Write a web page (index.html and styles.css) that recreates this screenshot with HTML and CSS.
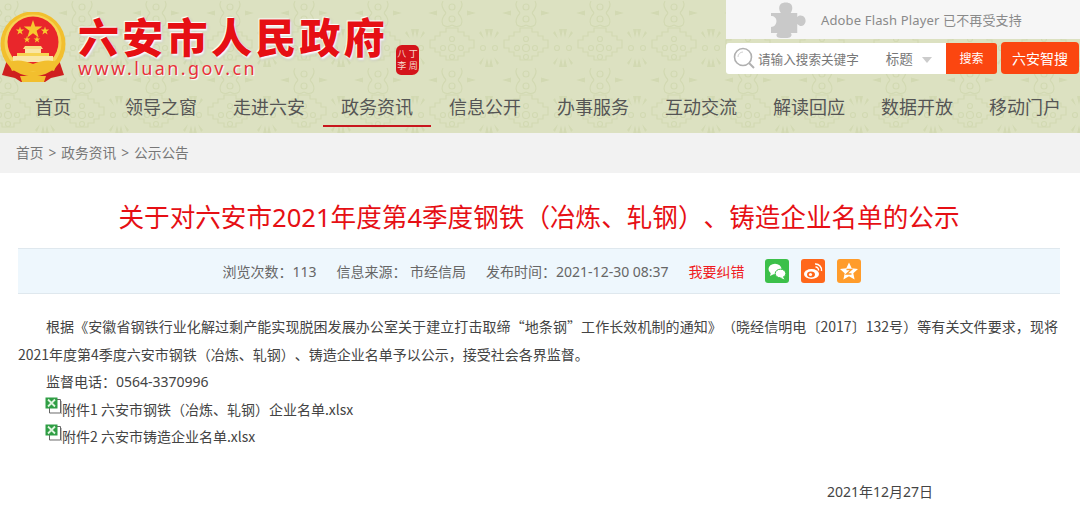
FILE: index.html
```html
<!DOCTYPE html>
<html>
<head>
    <meta charset="utf-8">
    <title>关于对六安市2021年度第4季度钢铁（冶炼、轧钢）、铸造企业名单的公示</title>
    <link rel="stylesheet" href="styles.css">
</head>
<body>
    <header class="site-head">
        <div class="head-top">
            <div class="logo">
                <svg class="emblem" viewBox="0 0 66 70" width="66" height="70">
                    <path d="M7 48 L2 63 L15 66 L21 70 L45 70 L51 66 L64 63 L59 48 Z" fill="#cf1f1f"/>
                    <circle cx="33" cy="32" r="32.5" fill="#f2bf2e"/>
                    <circle cx="33" cy="31" r="28.5" fill="#f7d353"/>
                    <circle cx="33" cy="30" r="25.5" fill="#e9262b"/>
                    <polygon points="33,8 35.2,14.6 42.2,14.6 36.6,18.8 38.7,25.4 33,21.3 27.3,25.4 29.4,18.8 23.8,14.6 30.8,14.6" fill="#f7c92f"/>
                    <polygon points="20,14.5 21,17.6 24.2,17.6 21.6,19.5 22.6,22.6 20,20.7 17.4,22.6 18.4,19.5 15.8,17.6 19,17.6" fill="#f7c92f"/>
                    <polygon points="45,14.5 46,17.6 49.2,17.6 46.6,19.5 47.6,22.6 45,20.7 42.4,22.6 43.4,19.5 40.8,17.6 44,17.6" fill="#f7c92f"/>
                    <polygon points="27,24 27.8,26.5 30.4,26.5 28.3,28 29.1,30.5 27,29 24.9,30.5 25.7,28 23.6,26.5 26.2,26.5" fill="#f7c92f"/>
                    <polygon points="37,24 37.8,26.5 40.4,26.5 38.3,28 39.1,30.5 37,29 34.9,30.5 35.7,28 33.6,26.5 36.2,26.5" fill="#f7c92f"/>
                    <path d="M23 37 H43 L41 34 H25 Z" fill="#f8dc84"/>
                    <rect x="25" y="37" width="16" height="4" fill="#f9e6a6"/>
                    <rect x="17" y="41" width="32" height="3" fill="#f7d353"/>
                    <rect x="13" y="44" width="40" height="6" fill="#f9e6a6"/>
                    <path d="M8 50 Q20 46 33 52 Q46 46 58 50 L54 59 Q44 55 38 61 Q33 57 28 61 Q22 55 12 59 Z" fill="#f2bf2e"/>
                    <path d="M20 64 H46 L44 70 H22 Z" fill="#f2bf2e"/>
                </svg>
                <div class="logo-text">
                    <div class="logo-name">六安市人民政府</div>
                    <div class="logo-url">www.luan.gov.cn</div>
                </div>
                <div class="seal"><span>八</span><span>丁</span><span>李</span><span>周</span></div>
            </div>
            <div class="head-right">
                <div class="flash-box">
                    <svg class="puzzle" viewBox="4 0 32 36" width="35" height="36" preserveAspectRatio="none">
                        <path d="M4 11 H13 C11 8 11 4 13 2 C15 0 20 0 22 2 C24 4 24 8 22 11 H28 V15 C30 13 33 13 35 16 C36 18 36 21 34 23 C32 25 30 24 28 22 V31 H22 C24 33 22 36 19 36 H13 C9 36 8 33 10 31 H4 V25 C7 25 9 22 9 19 C9 16 7 14 4 14 Z" fill="#c9c9c9"/>
                    </svg>
                    <span>Adobe Flash Player 已不再受支持</span>
                </div>
                <div class="search-row">
                    <div class="search-box">
                        <svg class="search-icon" viewBox="0 0 22 22" width="22" height="22">
                            <circle cx="10" cy="10" r="8.5" fill="none" stroke="#b0b0b0" stroke-width="1.6"/>
                            <path d="M5 10 A5 5 0 0 1 10 5" fill="none" stroke="#d0d0d0" stroke-width="1"/>
                            <path d="M16 16 L21 21" stroke="#b0b0b0" stroke-width="2"/>
                        </svg>
                        <span class="search-hint">请输入搜索关键字</span>
                        <span class="search-type">标题</span>
                        <i class="caret"></i>
                    </div>
                    <button class="btn-search">搜索</button>
                    <button class="btn-smart">六安智搜</button>
                </div>
            </div>
        </div>
        <nav class="main-nav">
            <a href="#">首页</a>
            <a href="#">领导之窗</a>
            <a href="#">走进六安</a>
            <a href="#" class="active">政务资讯</a>
            <a href="#">信息公开</a>
            <a href="#">办事服务</a>
            <a href="#">互动交流</a>
            <a href="#">解读回应</a>
            <a href="#">数据开放</a>
            <a href="#">移动门户</a>
        </nav>
    </header>

    <div class="crumbs">首页 &gt; 政务资讯 &gt; 公示公告</div>

    <main class="article">
        <h1>关于对六安市2021年度第4季度钢铁（冶炼、轧钢）、铸造企业名单的公示</h1>
        <div class="meta">
            <span>浏览次数：113</span>
            <span>信息来源：&nbsp;市经信局</span>
            <span>发布时间：2021-12-30 08:37</span>
            <a href="#" class="correct">我要纠错</a>
            <span class="shares">
                <svg class="share" viewBox="0 0 24 24" width="24" height="24">
                    <rect width="24" height="24" rx="3" fill="#3cc04a"/>
                    <ellipse cx="10" cy="10" rx="6.5" ry="5.3" fill="#fff"/>
                    <path d="M6 13 L5 17 L9 15 Z" fill="#fff"/>
                    <ellipse cx="15.5" cy="14.5" rx="5.3" ry="4.3" fill="#fff" stroke="#3cc04a"/>
                    <path d="M18 18 L19.5 20.5 L15 18.5 Z" fill="#fff"/>
                </svg>
                <svg class="share" viewBox="0 0 24 24" width="24" height="24">
                    <rect width="24" height="24" rx="3" fill="#ff671b"/>
                    <ellipse cx="10.5" cy="15" rx="7.5" ry="5" fill="#fff"/>
                    <ellipse cx="10" cy="15.5" rx="4" ry="3" fill="#ff671b"/>
                    <circle cx="9.5" cy="15.5" r="1.6" fill="#fff"/>
                    <path d="M14 5 A6 6 0 0 1 20.5 12" fill="none" stroke="#fff" stroke-width="1.5"/>
                    <path d="M14.5 8 A3 3 0 0 1 17.5 11.5" fill="none" stroke="#fff" stroke-width="1.3"/>
                </svg>
                <svg class="share" viewBox="0 0 24 24" width="24" height="24">
                    <rect width="24" height="24" rx="3" fill="#ff9c2b"/>
                    <polygon points="12,3.5 14.7,9.3 21,10 16.3,14.3 17.6,20.5 12,17.3 6.4,20.5 7.7,14.3 3,10 9.3,9.3" fill="#fff"/>
                    <path d="M9.5 10.5 H14.5 L9.5 15 H14.5" fill="none" stroke="#ff9c2b" stroke-width="1.4"/>
                </svg>
            </span>
        </div>
        <div class="content">
            <p class="indent cjk">根据《安徽省钢铁行业化解过剩产能实现脱困发展办公室关于建立打击取缔“地条钢”工作长效机制的通知》（晓经信明电〔2017〕132号）等有关文件要求，现将2021年度第4季度六安市钢铁（冶炼、轧钢）、铸造企业名单予以公示，接受社会各界监督。</p>
            <p class="indent">监督电话：0564-3370996</p>
            <p class="attach cjk">
                <svg class="xls" viewBox="0 0 17 17" width="17" height="17">
                    <path d="M4.5 2.5 H15.5 V16 H4.5 Z" fill="#fff" stroke="#666"/>
                    <path d="M16.5 4 V17 H6" fill="none" stroke="#bbb"/>
                    <rect x="0.5" y="0.5" width="12" height="11" fill="#2f9e44"/>
                    <path d="M3 2.5 L10 9.5 M10 2.5 L3 9.5" stroke="#dff5df" stroke-width="1.8"/>
                </svg><a href="#">附件1 六安市钢铁（冶炼、轧钢）企业名单.xlsx</a>
            </p>
            <p class="attach cjk">
                <svg class="xls" viewBox="0 0 17 17" width="17" height="17">
                    <path d="M4.5 2.5 H15.5 V16 H4.5 Z" fill="#fff" stroke="#666"/>
                    <path d="M16.5 4 V17 H6" fill="none" stroke="#bbb"/>
                    <rect x="0.5" y="0.5" width="12" height="11" fill="#2f9e44"/>
                    <path d="M3 2.5 L10 9.5 M10 2.5 L3 9.5" stroke="#dff5df" stroke-width="1.8"/>
                </svg><a href="#">附件2 六安市铸造企业名单.xlsx</a>
            </p>
            <p class="sign-date">2021年12月27日</p>
        </div>
    </main>
</body>
</html>
```
FILE: styles.css
```css
* {
    box-sizing: border-box;
}
html, body {
    height: 509px;
    overflow: hidden;
}
body {
    margin: 0;
    background: #fff;
    color: #555;
    font-family: "Noto Sans", "Noto Sans CJK SC", sans-serif;
    font-size: 14px;
    text-spacing-trim: space-all;
}
a {
    color: inherit;
    text-decoration: none;
}

/* 顶部 */
.site-head {
    height: 133px;
    background-color: #dce1c1;
    background-position: -29px 0;
    background-image: url("data:image/svg+xml,%3Csvg xmlns='http://www.w3.org/2000/svg' width='74' height='67'%3E%3Cg fill='none' stroke='%23d2d9b2' stroke-width='1.2'%3E%3Ccircle cx='37' cy='48' r='3.5'/%3E%3Ccircle cx='37' cy='39' r='2.5'/%3E%3Ccircle cx='37' cy='57' r='2.5'/%3E%3Ccircle cx='28' cy='48' r='2.5'/%3E%3Ccircle cx='46' cy='48' r='2.5'/%3E%3Cpath d='M37 28h-6v4h-6v4h-5v4h-5v8l5 0v4h5v4h6v4h6M37 28h6v4h6v4h5v4h5v8l-5 0v4h-5v4h-6v4h-6'/%3E%3Ccircle cx='37' cy='7' r='3'/%3E%3Ccircle cx='37' cy='19' r='3'/%3E%3Cpath d='M31 13q-6-7-3-12M43 13q6-7 3-12M31 13q-6 7-3 12q4 3 9 0M43 13q6 7 3 12q-4 3-9 0'/%3E%3Ccircle cx='68' cy='48' r='2.5'/%3E%3Ccircle cx='6' cy='48' r='2.5'/%3E%3C/g%3E%3Cg fill='%23d2d9b2'%3E%3Cpath d='M13 13l9-2.5v5zM61 13l-9-2.5v5zM0 29l2 9l2-9zM74 29l-2 9l-2-9zM8 31l-3 8l5-6zM66 31l3 8l-5-6zM0 67l2-9l2 9zM74 67l-2-9l-2 9zM8 65l-3-8l5 6zM66 65l3-8l-5 6z'/%3E%3C/g%3E%3C/svg%3E");
}
.head-top {
    display: flex;
    justify-content: space-between;
    height: 85px;
}
.logo {
    display: flex;
    padding-top: 12px;
}
.emblem {
    flex: none;
}
.logo-text {
    margin-left: 12px;
    padding-top: 2px;
}
.logo-name {
    color: #e60f14;
    font-size: 41px;
    font-weight: 900;
    line-height: 46px;
    letter-spacing: 3.3px;
    white-space: nowrap;
    text-shadow: 1px 2px 2px #fff, -1px -1px 1px #fff, 1px 2px 3px #aaa;
}
.logo-url {
    color: #e8323a;
    font-size: 18px;
    line-height: 16px;
    letter-spacing: 2.4px;
    text-shadow: 1px 1px 1px #fff;
}
.seal {
    display: grid;
    grid-template-columns: 1fr 1fr;
    align-content: center;
    width: 23px;
    height: 30px;
    margin: 33px 0 0 8px;
    border-radius: 6px 5px 7px 5px;
    background: #d4141a;
    color: #f6d9cc;
    font-size: 9px;
    line-height: 12px;
    text-align: center;
}
.head-right {
    width: 354px;
}
.flash-box {
    display: flex;
    align-items: center;
    height: 39px;
    padding-left: 45px;
    background: #f6f6f6;
    color: #8a8a8a;
    font-size: 13px;
    letter-spacing: 0.15px;
}
.puzzle {
    margin-right: 15px;
}
.search-row {
    display: flex;
    align-items: center;
    margin-top: 3px;
}
.search-box {
    display: flex;
    align-items: center;
    width: 220px;
    height: 31px;
    padding-left: 7px;
    border-radius: 3px 0 0 3px;
    background: #fff;
    color: #777;
    font-size: 12.6px;
}
.search-icon {
    margin-right: 3px;
}
.search-type {
    margin-left: 27px;
    font-size: 13.5px;
}
.caret {
    width: 0;
    height: 0;
    margin: 3px 0 0 9px;
    border: 5px solid transparent;
    border-top: 6px solid #ccc;
    border-bottom: 0;
}
.btn-search, .btn-smart {
    height: 31px;
    padding: 0;
    border: none;
    border-radius: 3px;
    background: #fb4610;
    color: #fff;
    font-family: inherit;
    font-size: 12px;
}
.btn-search {
    width: 51px;
    border-radius: 0 3px 3px 0;
}
.btn-smart {
    width: 78px;
    height: 32px;
    margin-left: 4px;
    border-radius: 4px;
    font-size: 14px;
}
.main-nav {
    display: flex;
    height: 48px;
    margin-left: -1px;
}
.main-nav a {
    width: 108px;
    height: 42px;
    color: #555;
    font-size: 18px;
    line-height: 44px;
    text-align: center;
}
.main-nav a.active {
    border-bottom: 2px solid #c8161d;
}

/* 面包屑 */
.crumbs {
    height: 40px;
    padding-left: 16px;
    background: #f2f2f2;
    color: #777;
    font-size: 13.7px;
    line-height: 40px;
    word-spacing: 1.5px;
}

/* 正文 */
.article {
    padding: 0 22px 0 18px;
}
h1 {
    margin: 0 -2px 0 0;
    padding-top: 28px;
    color: #e60f14;
    font-size: 25.6px;
    font-weight: 400;
    line-height: 34px;
    text-align: center;
}
.meta {
    display: flex;
    justify-content: center;
    align-items: center;
    gap: 20px;
    height: 46px;
    margin: 13px -2px 0 0;
    padding-left: 5px;
    border-top: 1px solid #dfe8ee;
    border-bottom: 1px solid #dfe8ee;
    background: #eef7fd;
    color: #666;
    font-size: 14px;
}
.correct {
    color: #f01c22;
}
.shares {
    display: flex;
    gap: 12px;
}
.share {
    display: block;
}
.content {
    padding-top: 19px;
    color: #444;
    line-height: 27.5px;
}
.content p {
    margin: 0;
}
.cjk {
    font-family: "Noto Sans CJK SC", sans-serif;
}
.indent {
    text-indent: 28px;
    text-align: justify;
}
.attach {
    padding-left: 27px;
}
.xls {
    vertical-align: 1px;
}
.sign-date {
    padding-top: 27px;
    padding-left: 809px;
}
```
